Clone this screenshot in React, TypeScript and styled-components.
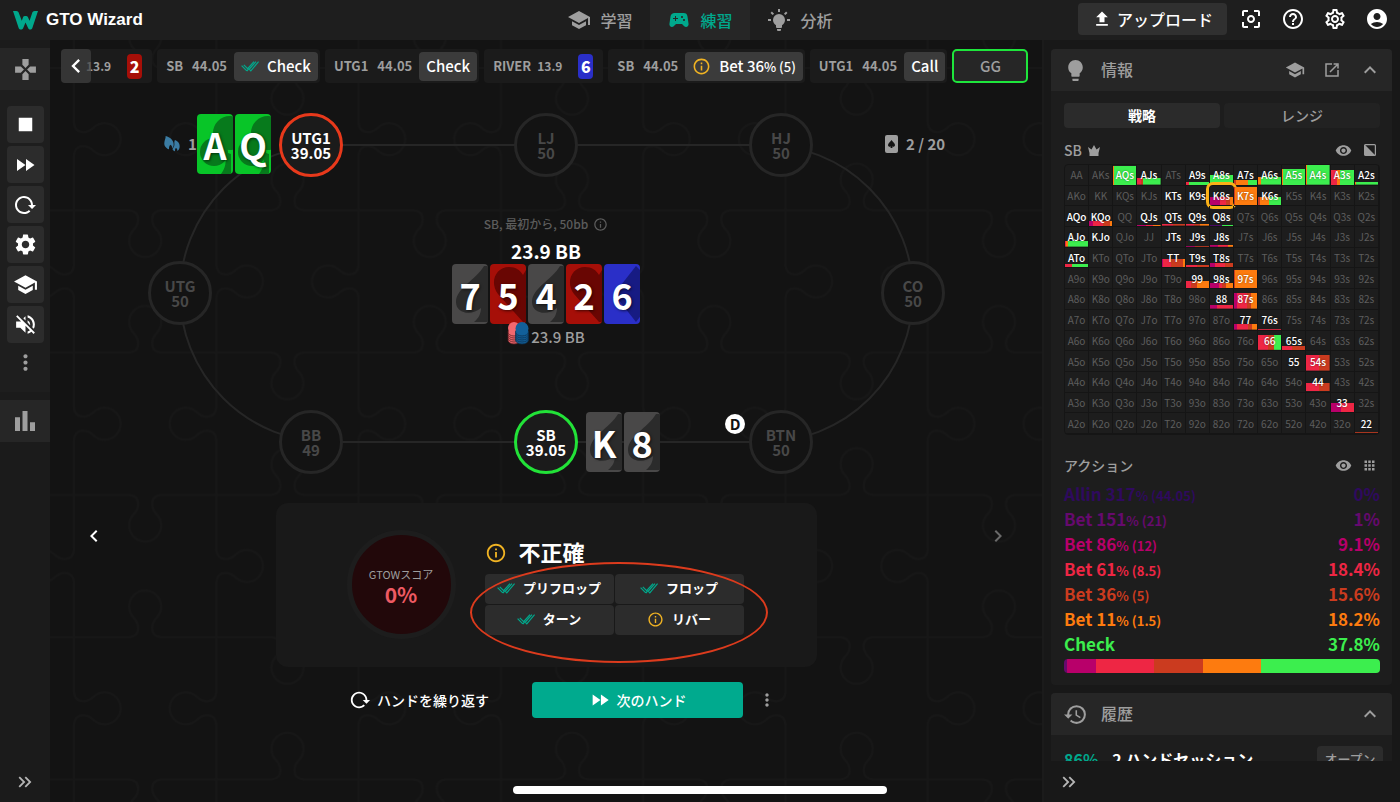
import React from 'react';
import styled, { createGlobalStyle, css } from 'styled-components';
import {
  MdSchool, MdSportsEsports, MdUpload, MdCenterFocusWeak, MdHelpOutline, MdOutlineSettings,
  MdAccountCircle, MdLightbulb, MdKeyboardArrowUp, MdVisibility, MdHistory, MdApps, MdStop,
  MdFastForward, MdSettings, MdVolumeOff, MdMoreVert, MdBarChart, MdGamepad,
  MdKeyboardDoubleArrowRight, MdInfoOutline, MdChevronLeft, MdChevronRight,
} from 'react-icons/md';

const color = {
  page: '#131313',
  rail: '#1b1b1b',
  bar: '#1e1e1e',
  raised: '#262626',
  button: '#2c2c2c',
  chip: '#3b3b3b',
  muted: '#9e9e9e',
  dim: '#484848',
  line: '#262626',
  teal: '#00a88c',
  amber: '#f0b323',
};

const action = {
  p: '#4a0a66',
  v: '#660a6e',
  m: '#b8006a',
  r: '#ee2644',
  b: '#cb3b1f',
  o: '#fd7b0f',
  g: '#3cee4e',
};
type ActionKey = keyof typeof action;

const GlobalStyle = createGlobalStyle`
  *, *::before, *::after { box-sizing: border-box; }
  body {
    margin: 0;
    background: ${color.page};
    color: #fff;
    font-family: "Noto Sans CJK JP", "Noto Sans", sans-serif;
    font-size: 14px;
    line-height: 20px;
  }
  button { font: inherit; color: inherit; border: 0; padding: 0; background: none; cursor: pointer; }
  a { color: inherit; text-decoration: none; }
  h1, h2, p { margin: 0; font-size: inherit; font-weight: inherit; }
  small { line-height: 0; }
  svg { display: block; flex: none; }
`;

/* ---------- icons ---------- */

const ReloadIcon = ({ size = 24 }: { size?: number }) => (
  <svg width={size} height={size} viewBox="0 0 24 24" fill="currentColor" aria-hidden>
    <path d="M2 12C2 16.97 6.03 21 11 21C13.39 21 15.68 20.06 17.4 18.4L15.9 16.9C14.63 18.25 12.86 19 11 19C4.76 19 1.64 11.46 6.05 7.05C10.46 2.64 18 5.77 18 12H15L19 16H19.1L23 12H20C20 7.03 15.97 3 11 3C6.03 3 2 7.03 2 12Z" />
  </svg>
);

const BulbOnIcon = () => (
  <svg width="24" height="24" viewBox="0 0 24 24" fill="currentColor" aria-hidden>
    <path d="M12,6A6,6 0 0,1 18,12C18,14.22 16.79,16.16 15,17.2V19A1,1 0 0,1 14,20H10A1,1 0 0,1 9,19V17.2C7.21,16.16 6,14.22 6,12A6,6 0 0,1 12,6M14,21V22A1,1 0 0,1 13,23H11A1,1 0 0,1 10,22V21H14M20,11H23V13H20V11M1,11H4V13H1V11M13,1V4H11V1H13M4.92,3.5L7.05,5.64L5.63,7.05L3.5,4.93L4.92,3.5M16.95,5.63L19.07,3.5L20.5,4.93L18.37,7.05L16.95,5.63Z" />
  </svg>
);

const LogoMark = () => (
  <svg width="25" height="19" viewBox="0 0 74 56" fill={color.teal} aria-hidden>
    <path d="M0 0C6 -1 15 -1 17 5L26 29L30 18C32 14 42 14 44 18L49 29L57 5C59 -1 68 -1 74 0L57 51C55 56 47 56 45 51L37 34L30 51C28 56 19 56 17 51Z" />
  </svg>
);

const DoubleCheckIcon = () => (
  <svg width="18" height="12" viewBox="0 0 18 12" fill="none" stroke={color.teal} strokeWidth="1.2" aria-hidden>
    <path d="M.6 5.6L5.800 10.800M2.800 4.800L6.600 8.600L13 1.600M5.800 11L8 8.600M8.400 9.400L9.800 10.800L17.600 1.600M8.400 9L15 1.600" />
  </svg>
);

const CrownIcon = () => (
  <svg width="12" height="11" viewBox="0 0 24 22" fill={color.muted} aria-hidden>
    <path d="M3 16L0 4L7 9L12 0L17 9L24 4L21 16ZM3 16H21V22H3Z" />
  </svg>
);

const PopOutIcon = () => (
  <svg width="14" height="14" viewBox="0 0 14 14" fill="none" stroke={color.muted} strokeWidth="1.5" aria-hidden>
    <path d="M7 1H1V13H13V7M5 9L12 2M8.600 1H13V5.400" />
  </svg>
);

const HalfSquareIcon = () => (
  <svg width="12" height="12" viewBox="0 0 12 12" aria-hidden>
    <rect x=".6" y=".6" width="10.800" height="10.800" rx="1" fill="none" stroke={color.muted} strokeWidth="1.200" />
    <path d="M.6 .6L11.400 11.400H.6Z" fill={color.muted} />
  </svg>
);

const HandCountIcon = () => (
  <svg width="13" height="18" viewBox="0 0 13 18" aria-hidden>
    <rect width="13" height="18" rx="2" fill={color.muted} />
    <path d="M6.500 5C7.500 7 10 8 10 10C10 11.800 8 12.200 7 11.200L7.600 13H5.400L6 11.200C5 12.200 3 11.800 3 10C3 8 5.500 7 6.500 5Z" fill={color.page} />
  </svg>
);

const DropsIcon = () => (
  <svg width="16" height="16" viewBox="0 0 48 48" fill="#3b7ca3" aria-hidden>
    <path d="M5 0C18 3 29 13 29 25C29 30 28 34 25 37C25 32 23 29 20 26C15 29 15 34 15 40C6 36 0 30 1 20C2 12 5 8 5 0Z" />
    <path d="M33 12C41 15 47 21 47 30C47 36 46 41 40 45C40 40 39 38 36 36C33 38 33 41 33 46C27 43 25 41 26 38C30 33 32 29 31 22C31 18 31 15 33 12Z" />
  </svg>
);

const ChipsIcon = () => (
  <svg width="22" height="24" viewBox="0 0 22 24" aria-hidden>
    {[20, 18, 16, 14, 12].map((y) => (
      <ellipse key={y} cx="7" cy={y - 1} rx="6" ry="4" fill="#f2686f" stroke="#5d2023" strokeWidth=".8" />
    ))}
    <circle cx="7" cy="7" r="6" fill="#f2686f" />
    {[19, 17, 15, 13, 11].map((y) => (
      <ellipse key={y} cx="15" cy={y} rx="6.500" ry="4" fill="#12609a" stroke="#0b2f4c" strokeWidth=".8" />
    ))}
    <circle cx="15" cy="7.500" r="6.500" fill="#12609a" />
  </svg>
);

/* ---------- playing cards ---------- */

type Suit = 'spade' | 'heart' | 'diamond' | 'club';
const suits: Record<Suit, { face: string; ink: string; art: React.ReactNode }> = {
  spade: {
    face: '#494848',
    ink: '#2b2b2b',
    art: <path d="M32 2C24 16 4 24 4 38C4 50 20 52 29 44C29 49 27 54 22 58H42V2Z" />,
  },
  heart: {
    face: '#a60f08',
    ink: '#690603',
    art: <path d="M33 58L8 30C-1 18 6 3 19 3C26 3 30 6 33 11L36 6V58Z" />,
  },
  diamond: { face: '#2a2fc8', ink: '#171b83', art: <path d="M32 2L10 30L32 58L44 42V14Z" /> },
  club: {
    face: '#08c528',
    ink: '#077a1c',
    art: (
      <>
        <circle cx="33" cy="19" r="17" />
        <circle cx="17" cy="38" r="14" />
        <path d="M28 38L34 40V60H24C28 55 30 48 28 38Z" />
      </>
    ),
  },
};

const CardFace = styled.div<{ $suit: Suit }>`
  position: relative;
  width: 36px;
  height: 60px;
  border-radius: 4px;
  background: ${(p) => suits[p.$suit].face};
  font-size: 36px;
  line-height: 60px;
  font-weight: 700;
  text-align: center;
  text-shadow: 1px 1px 3px rgba(0, 0, 0, 0.6);

  svg {
    position: absolute;
    inset: 0;
    border-radius: 4px;
    fill: ${(p) => suits[p.$suit].ink};
  }
  span { position: relative; }
`;

const PlayingCard = ({ rank, suit }: { rank: string; suit: Suit }) => (
  <CardFace $suit={suit}>
    <svg width="36" height="60" viewBox="0 0 36 60" aria-hidden>{suits[suit].art}</svg>
    <span>{rank}</span>
  </CardFace>
);

/* ---------- shell ---------- */

const Shell = styled.div`
  display: flex;
  flex-direction: column;
  height: 100vh;
  min-height: 760px;
  overflow: hidden;
`;

const Header = styled.header`
  display: grid;
  grid-template-columns: 1fr auto 1fr;
  align-items: center;
  height: 40px;
  flex: none;
  background: ${color.bar};
`;

const Brand = styled.a`
  display: flex;
  align-items: center;
  gap: 8px;
  padding-left: 13px;
  font: 700 17px/20px "Liberation Sans", Arial, sans-serif;
`;

const Tabs = styled.nav`
  display: flex;
  height: 40px;
`;

const Tab = styled.a<{ $active?: boolean }>`
  display: flex;
  align-items: center;
  justify-content: center;
  gap: 9px;
  width: 100px;
  font-size: 16px;
  font-weight: 500;
  color: ${(p) => (p.$active ? color.teal : color.muted)};
  background: ${(p) => (p.$active ? color.raised : 'transparent')};
`;

const HeaderTools = styled.div`
  display: flex;
  align-items: center;
  justify-content: flex-end;
  gap: 18px;
  padding: 0 11px 2px 0;
`;

const UploadButton = styled.button`
  display: flex;
  align-items: center;
  justify-content: center;
  gap: 5px;
  width: 149px;
  height: 32px;
  margin-right: -6px;
  border-radius: 4px;
  background: #303030;
  font-size: 16px;
  font-weight: 500;
`;

const Body = styled.div`
  display: flex;
  flex: 1;
  min-height: 0;
`;

/* ---------- left rail ---------- */

const Rail = styled.aside`
  display: flex;
  flex-direction: column;
  width: 50px;
  flex: none;
  padding-top: 8px;
  background: ${color.rail};
`;

const RailBlock = styled.button`
  display: grid;
  place-items: center;
  height: 42px;
  background: ${color.raised};
  color: ${color.muted};
`;

const RailTools = styled.div`
  display: flex;
  flex-direction: column;
  align-items: center;
  gap: 3px;
  padding: 16px 0 14px;
  margin-bottom: 8px;
  background: ${color.bar};
`;

const RailButton = styled.button<{ $plain?: boolean }>`
  display: grid;
  place-items: center;
  width: 37px;
  height: ${(p) => (p.$plain ? 32 : 37)}px;
  border-radius: 4px;
  background: ${(p) => (p.$plain ? 'transparent' : color.button)};
  color: ${(p) => (p.$plain ? color.muted : '#fff')};
`;

const ExpandButton = styled.button`
  display: grid;
  place-items: center;
  width: 50px;
  height: 41px;
  margin-top: auto;
  color: #b5b5b5;
`;

/* ---------- centre ---------- */

const Main = styled.main`
  position: relative;
  flex: 1;
  min-width: 0;
  display: flex;
  flex-direction: column;
  overflow: hidden;
  isolation: isolate;
`;

const Backdrop = styled.svg`
  position: absolute;
  inset: 0;
  z-index: -1;
`;

const HistoryBar = styled.div`
  display: flex;
  gap: 5px;
  padding: 9px 11px 0;
  position: relative;
`;

const HistoryItem = styled.div`
  display: flex;
  align-items: center;
  gap: 9px;
  height: 34px;
  padding: 0 2px 0 9px;
  border-radius: 4px;
  background: ${color.rail};
  color: ${color.muted};
  font-size: 13px;
  font-weight: 700;
  white-space: nowrap;

  > span { margin-right: -2px; }
  > small { font-size: 12px; }
`;

const StreetItem = styled(HistoryItem)`
  gap: 6px;
  padding-right: 10px;
  b { margin-left: 10px; }
`;

const FirstStreet = styled(StreetItem)`
  padding-left: 25px;
`;

const BackButton = styled.button`
  position: absolute;
  left: 11px;
  top: 9px;
  display: grid;
  place-items: center;
  width: 30px;
  height: 34px;
  border-radius: 4px;
  background: rgba(64, 64, 64, 0.7);
`;

const MiniCard = styled.b<{ $suit: Suit }>`
  width: 15px;
  height: 25px;
  border-radius: 4px;
  background: ${(p) => suits[p.$suit].face};
  color: #fff;
  font-size: 16px;
  line-height: 24px;
  text-align: center;
`;

const Move = styled.button`
  display: flex;
  align-items: center;
  gap: 6px;
  height: 29px;
  padding: 0 7px;
  border-radius: 4px;
  background: ${color.chip};
  color: #fff;
  font-size: 15px;
  font-weight: 500;

  small { font-size: 13px; }
  svg + span { padding-left: 2px; }
`;

const EndItem = styled.button`
  width: 76px;
  height: 34px;
  border: 2px solid #1ee63c;
  border-radius: 5px;
  background: ${color.raised};
  color: ${color.muted};
  font-size: 15px;
  font-weight: 500;
`;

const Table = styled.section`
  position: relative;
  width: 800px;
  height: 390px;
  margin: 13px auto 0;
  flex: none;
`;

const Felt = styled.div`
  position: absolute;
  inset: 48px 32px 43px 33px;
  border: 2px solid ${color.line};
  border-radius: 150px;
`;

type Tone = 'dim' | 'hero' | 'villain';
const toneColor: Record<Tone, string> = { dim: color.line, hero: '#22e238', villain: '#e8391b' };

const Seat = styled.div<{ $x: number; $y: number; $tone: Tone }>`
  position: absolute;
  left: ${(p) => p.$x - 32}px;
  top: ${(p) => p.$y - 32}px;
  display: flex;
  flex-direction: column;
  align-items: center;
  justify-content: center;
  width: 64px;
  height: 64px;
  border: 3px solid ${(p) => toneColor[p.$tone]};
  border-radius: 50%;
  background: ${(p) => (p.$tone === 'dim' ? color.page : '#1b1b1b')};
  color: ${(p) => (p.$tone === 'dim' ? color.dim : '#fff')};
  font-size: 15px;
  font-weight: 700;
  line-height: 15px;
`;

const Placed = styled.div<{ $x: number; $y: number }>`
  position: absolute;
  left: ${(p) => p.$x}px;
  top: ${(p) => p.$y}px;
  display: flex;
  align-items: center;
  gap: 2px;
`;

const BetTag = styled(Placed)`
  gap: 8px;
  color: ${color.muted};
  font-size: 15px;
  font-weight: 700;
`;

const Dealer = styled(Placed)`
  justify-content: center;
  width: 20px;
  height: 20px;
  border-radius: 50%;
  background: #fff;
  color: #111;
  font-size: 15px;
  font-weight: 700;
`;

const Board = styled.div`
  position: absolute;
  inset: 117px 0 auto;
  display: flex;
  flex-direction: column;
  align-items: center;
`;

const SpotName = styled.p`
  display: flex;
  align-items: center;
  gap: 5px;
  height: 22px;
  color: #5c5c5c;
  font-size: 12px;
  font-weight: 500;
`;

const Pot = styled.p`
  height: 29px;
  font-size: 19px;
  line-height: 31px;
  font-weight: 700;
`;

const BoardCards = styled.div`
  display: flex;
  gap: 2px;
`;

const PotChips = styled.p`
  display: flex;
  align-items: center;
  gap: 2px;
  height: 24px;
  margin-top: -3px;
  z-index: 1;
  color: ${color.muted};
  font-size: 15px;
  font-weight: 500;
  span { padding-top: 8px; }
`;

const Review = styled.section`
  display: flex;
  align-items: flex-start;
  justify-content: space-between;
  margin-top: 17px;
  padding: 0 32px;
`;

const StepButton = styled.button<{ $muted?: boolean }>`
  display: grid;
  place-items: center;
  width: 24px;
  height: 24px;
  margin-top: 21px;
  color: ${(p) => (p.$muted ? '#6a6a6a' : '#fff')};
`;

const ResultPanel = styled.div`
  display: flex;
  width: 541px;
  height: 164px;
  padding: 27px 71px 0;
  gap: 29px;
  border-radius: 12px;
  background: #191919;
`;

const Score = styled.div`
  display: flex;
  flex-direction: column;
  align-items: center;
  justify-content: center;
  width: 109px;
  height: 109px;
  border: 5px solid #1d1d1d;
  border-radius: 50%;
  background: #22080a;
  color: ${color.muted};
  font-size: 11px;
  line-height: 18px;

  strong { color: #ee5a63; font-size: 21px; line-height: 22px; font-weight: 700; }
`;

const Verdict = styled.div`
  position: relative;
  padding-top: 8px;
`;

const VerdictTitle = styled.h2`
  display: flex;
  align-items: center;
  gap: 12px;
  height: 30px;
  font-size: 22px;
  font-weight: 700;
  svg { color: ${color.amber}; }
  span { padding-bottom: 4px; }
`;

const Streets = styled.div`
  display: grid;
  grid-template-columns: 129px 129px;
  gap: 1px;
  padding-top: 6px;
`;

const StreetButton = styled.button`
  display: flex;
  align-items: center;
  justify-content: center;
  gap: 8px;
  height: 30px;
  padding-bottom: 2px;
  border-radius: 4px;
  background: ${color.button};
  font-size: 13px;
  font-weight: 700;
`;

const Circled = styled.div`
  position: absolute;
  left: -15px;
  top: 32px;
  width: 298px;
  height: 101px;
  border: 2px solid #dc3b1d;
  border-radius: 50%;
  pointer-events: none;
`;

const Footer = styled.div`
  display: flex;
  align-items: center;
  justify-content: center;
  gap: 10px;
  margin-top: 15px;
  padding-left: 38px;
`;

const RepeatButton = styled.button`
  display: flex;
  align-items: center;
  gap: 6px;
  margin-right: 33px;
  font-weight: 500;
`;

const NextButton = styled.button`
  display: flex;
  align-items: center;
  justify-content: center;
  gap: 6px;
  width: 211px;
  height: 36px;
  border-radius: 4px;
  background: #00aa8e;
  font-weight: 500;
`;

const MoreButton = styled.button`
  color: ${color.muted};
  padding: 0 4px;
`;

/* ---------- right column ---------- */

const Side = styled.aside`
  display: flex;
  flex-direction: column;
  width: 358px;
  flex: none;
  border-left: 2px solid ${color.rail};
  background: #181818;
`;

const SideScroll = styled.div`
  flex: 1;
  min-height: 0;
  overflow: hidden;
  padding: 9px 8px 0 7px;
  display: flex;
  flex-direction: column;
  gap: 8px;
`;

const Panel = styled.section`
  flex: none;
  border-radius: 4px;
  background: #1d1d1d;
`;

const PanelHead = styled.header`
  display: flex;
  align-items: center;
  gap: 16px;
  height: 42px;
  padding: 0 13px 0 12px;
  border-radius: 4px 4px 0 0;
  background: ${color.raised};
  color: ${color.muted};

  h2 { flex: 1; padding-bottom: 2px; margin-left: -3px; font-size: 16px; font-weight: 500; }
`;

const HeadTool = styled.button`
  display: grid;
  place-items: center;
  width: 21px;
`;

const InfoBody = styled.div`
  padding: 12px 12px 12px 13px;
`;

const Switch = styled.div`
  display: grid;
  grid-template-columns: 1fr 1fr;
  gap: 4px;
`;

const SwitchButton = styled.button<{ $on?: boolean }>`
  height: 25px;
  padding-bottom: 2px;
  border-radius: 4px;
  background: ${(p) => (p.$on ? '#2b2b2b' : '#222')};
  color: ${(p) => (p.$on ? '#fff' : color.muted)};
  font-weight: ${(p) => (p.$on ? 700 : 500)};
`;

const Caption = styled.div<{ $space: number }>`
  display: flex;
  align-items: center;
  gap: 10px;
  height: 20px;
  margin-top: ${(p) => p.$space}px;
  color: ${color.muted};
  font-weight: 500;

  span { margin-right: auto; display: flex; align-items: center; gap: 6px; }
`;

const CaptionTool = styled.button`
  display: grid;
  place-items: center;
  width: 17px;
  &:last-child { width: 21px; margin-left: -3px; }
`;

const Matrix = styled.table`
  width: 100%;
  height: 271px;
  margin-top: 4px;
  table-layout: fixed;
  border-collapse: separate;
  border-spacing: 0;
  border: 1px solid #151515;
  border-radius: 4px;
`;

const fillStops = (mix: string) => {
  let at = 0;
  return mix.split(' ').map((part) => {
    const from = at;
    at += Number(part.slice(1));
    return `${action[part[0] as ActionKey]} ${from}% ${at}%`;
  }).join(', ');
};

const Cell = styled.td<{ $in: boolean; $h?: number; $mix?: string; $picked?: boolean }>`
  position: relative;
  padding: 0;
  border-right: 1px solid #151515;
  border-bottom: 1px solid #151515;
  font-size: 10px;
  line-height: 15px;
  text-align: center;
  background-clip: padding-box;
  color: ${(p) => (p.$in ? '#fff' : '#5d5d5d')};
  font-weight: ${(p) => (p.$in ? 500 : 400)};
  ${(p) => p.$in && css`text-shadow: 0 0 2px rgba(0, 0, 0, 0.5);`}
  ${(p) => p.$mix && css`
    background-image: linear-gradient(to right, ${fillStops(p.$mix)});
    background-size: 100% ${p.$h}%;
    background-position: bottom;
    background-repeat: no-repeat;
  `}
  ${(p) => p.$picked && css`
    &::after {
      content: '';
      position: absolute;
      inset: -4px;
      border: 3px solid #fbb117;
      border-radius: 7px;
    }
  `}
`;

const Actions = styled.ul`
  list-style: none;
  margin: 6px 0 3px;
  padding: 0;
`;

const ActionRow = styled.li<{ $color: string }>`
  display: flex;
  justify-content: space-between;
  color: ${(p) => p.$color};
  font-size: 17px;
  line-height: 25px;
  font-weight: 700;
  small { font-size: 13px; }
`;

const MixBar = styled.div`
  display: flex;
  height: 14px;
  border-radius: 4px;
  overflow: hidden;
`;

const MixPart = styled.div<{ $share: number; $color: string }>`
  flex: ${(p) => p.$share} 0 0;
  background: ${(p) => p.$color};
`;

const Session = styled.div`
  display: flex;
  align-items: center;
  gap: 14px;
  padding: 11px 9px 12px 13px;
  font-size: 16px;
  font-weight: 700;

  em { font-style: normal; color: ${color.teal}; }
  p { flex: 1; }
`;

const OpenButton = styled.button`
  width: 66px;
  height: 26px;
  border-radius: 4px;
  background: ${color.button};
  color: ${color.muted};
  font-size: 13px;
  font-weight: 500;
`;

const HomeIndicator = styled.div`
  position: fixed;
  left: 50%;
  bottom: 8px;
  width: 374px;
  height: 8px;
  margin-left: -187px;
  border-radius: 4px;
  background: #fff;
`;

/* ---------- data ---------- */

const ranks = 'AKQJT98765432'.split('');

/* share of the cell height, then the action mix from left to right */
const range: Record<string, [number, string] | null> = {
  AQs: [95, 'o4 g96'], AJs: [33, 'r18 b10 g72'], A9s: [15, 'r12 g88'], A8s: [50, 'g100'],
  A7s: [25, 'b10 o50 g40'], A6s: [38, 'o12 g88'], A5s: [80, 'o4 g96'], A4s: [100, 'o5 g95'],
  A3s: [75, 'r25 o15 g60'], A2s: [13, 'o4 g96'],
  KTs: null, K9s: [4, 'm30 r70'], K8s: [45, 'm42 r28 b15 o15'], K7s: [98, 'b6 o94'], K6s: [45, 'b8 o42 g50'],
  AQo: null, KQo: [25, 'm18 r45 b27 o10'], QJs: [7, 'm40 r30 o30'], QTs: [8, 'r50 b50'],
  Q9s: [8, 'r35 b25 o40'], Q8s: [7, 'p50 g50'],
  AJo: [28, 'r4 o8 g88'], KJo: null, JTs: null, J9s: [4, 'm40 b60'], J8s: [9, 'm35 r45 o20'],
  ATo: [18, 'r30 g70'], TT: [43, 'm5 r35 b52 o8'], T9s: [12, 'r50 b50'], T8s: [25, 'm20 r45 b35'],
  99: [38, 'r20 b30 o50'], '98s': [28, 'm38 r16 b16 o30'], '97s': [90, 'b5 o95'],
  88: [18, 'm30 r70'], '87s': [78, 'm12 r43 b20 o25'],
  77: [28, 'm15 r45 b20 o20'], '76s': [4, 'r100'],
  66: [78, 'r42 b28 g30'], '65s': [22, 'r45 b55'],
  55: null, '54s': [78, 'r55 b45'],
  44: [42, 'r55 b45'],
  33: [50, 'm45 r55'],
  22: [4, 'b100'],
};

const handName = (row: number, col: number) => {
  if (row === col) return ranks[row] + ranks[col];
  return col > row ? `${ranks[row]}${ranks[col]}s` : `${ranks[col]}${ranks[row]}o`;
};

const actions: { name: string; note?: string; share: string; color: string }[] = [
  { name: 'Allin 317', note: '% (44.05)', share: '0%', color: '#2f0a5e' },
  { name: 'Bet 151', note: '% (21)', share: '1%', color: '#660a6e' },
  { name: 'Bet 86', note: '% (12)', share: '9.1%', color: '#b8006a' },
  { name: 'Bet 61', note: '% (8.5)', share: '18.4%', color: '#ee2644' },
  { name: 'Bet 36', note: '% (5)', share: '15.6%', color: '#cb3b1f' },
  { name: 'Bet 11', note: '% (1.5)', share: '18.2%', color: '#fd7b0f' },
  { name: 'Check', share: '37.8%', color: '#3cee4e' },
];

const seats: { name: string; stack: string; x: number; y: number; tone?: Tone }[] = [
  { name: 'UTG1', stack: '39.05', x: 165, y: 49, tone: 'villain' },
  { name: 'LJ', stack: '50', x: 400, y: 49 },
  { name: 'HJ', stack: '50', x: 635, y: 49 },
  { name: 'CO', stack: '50', x: 767, y: 197 },
  { name: 'BTN', stack: '50', x: 635, y: 346 },
  { name: 'SB', stack: '39.05', x: 400, y: 346, tone: 'hero' },
  { name: 'BB', stack: '49', x: 165, y: 346 },
  { name: 'UTG', stack: '50', x: 34, y: 197 },
];

/* one jigsaw side of length s starting at (x, y), its knob pointing across the side */
const s = 142.3;
const side = (x: number, y: number, vertical: boolean, dir: number) => {
  const pt = (a: number, b: number) => (vertical ? `${x + b * dir} ${y + a}` : `${x + a} ${y + b * dir}`);
  const h = s / 2;
  const sweep = (dir > 0) !== vertical ? 0 : 1;
  return `M${pt(0, 0)}L${pt(h - 16, 0)}Q${pt(h - 7, 1)} ${pt(h - 7, 9)}Q${pt(h - 7, 15)} ${pt(h - 12, 20)}` +
    `A16 16 0 1 ${sweep} ${pt(h + 12, 20)}Q${pt(h + 7, 15)} ${pt(h + 7, 9)}Q${pt(h + 7, 1)} ${pt(h + 16, 0)}L${pt(s, 0)}`;
};

const Jigsaw = () => (
  <Backdrop width="100%" height="100%" aria-hidden>
    <defs>
      <pattern id="jigsaw" x="24" y="28" width={s * 2} height={s * 2} patternUnits="userSpaceOnUse">
        {[-1, 0, 1, 2].map((i) => [-1, 0, 1, 2].map((j) => {
          const flip = (i + j) % 2 === 0 ? 1 : -1;
          return (
            <path
              key={`${i},${j}`}
              d={side(i * s, j * s, false, -flip) + side(i * s, j * s, true, flip)}
              fill="none"
              stroke="#171717"
              strokeWidth="2"
            />
          );
        }))}
      </pattern>
    </defs>
    <rect width="100%" height="100%" fill="url(#jigsaw)" />
  </Backdrop>
);

export default function App() {
  return (
    <Shell>
      <GlobalStyle />
      <Header>
        <Brand href="#"><LogoMark />GTO Wizard</Brand>
        <Tabs>
          <Tab href="#"><MdSchool size={24} />学習</Tab>
          <Tab href="#" $active><MdSportsEsports size={24} />練習</Tab>
          <Tab href="#"><BulbOnIcon />分析</Tab>
        </Tabs>
        <HeaderTools>
          <UploadButton><MdUpload size={20} />アップロード</UploadButton>
          <button aria-label="Focus"><MdCenterFocusWeak size={24} /></button>
          <button aria-label="Help"><MdHelpOutline size={24} /></button>
          <button aria-label="Settings"><MdOutlineSettings size={24} /></button>
          <button aria-label="Account"><MdAccountCircle size={24} /></button>
        </HeaderTools>
      </Header>

      <Body>
        <Rail>
          <RailBlock aria-label="Trainer"><MdGamepad size={25} /></RailBlock>
          <RailTools>
            <RailButton aria-label="Stop"><MdStop size={27} /></RailButton>
            <RailButton aria-label="Skip"><MdFastForward size={24} /></RailButton>
            <RailButton aria-label="Repeat"><ReloadIcon /></RailButton>
            <RailButton aria-label="Options"><MdSettings size={25} /></RailButton>
            <RailButton aria-label="Study"><MdSchool size={25} /></RailButton>
            <RailButton aria-label="Mute"><MdVolumeOff size={25} /></RailButton>
            <RailButton aria-label="More" $plain><MdMoreVert size={25} /></RailButton>
          </RailTools>
          <RailBlock aria-label="Statistics"><MdBarChart size={30} /></RailBlock>
          <ExpandButton aria-label="Expand"><MdKeyboardDoubleArrowRight size={22} /></ExpandButton>
        </Rail>

        <Main>
          <Jigsaw />
          <HistoryBar>
            <FirstStreet><small>13.9</small><MiniCard $suit="heart">2</MiniCard></FirstStreet>
            <BackButton aria-label="Back"><MdChevronLeft size={28} /></BackButton>
            <HistoryItem>SB <span>44.05</span><Move><DoubleCheckIcon /><span>Check</span></Move></HistoryItem>
            <HistoryItem>UTG1 <span>44.05</span><Move>Check</Move></HistoryItem>
            <StreetItem>RIVER <small>13.9</small><MiniCard $suit="diamond">6</MiniCard></StreetItem>
            <HistoryItem>
              SB <span>44.05</span>
              <Move><MdInfoOutline size={19} color={color.amber} /><span>Bet 36<small>% (5)</small></span></Move>
            </HistoryItem>
            <HistoryItem>UTG1 <span>44.05</span><Move>Call</Move></HistoryItem>
            <EndItem>GG</EndItem>
          </HistoryBar>

          <Table>
            <Felt />
            {seats.map((seat) => (
              <Seat key={seat.name} $x={seat.x} $y={seat.y} $tone={seat.tone ?? 'dim'}>
                <span>{seat.name}</span>
                <span>{seat.stack}</span>
              </Seat>
            ))}
            <BetTag $x={18} $y={38}><DropsIcon />1</BetTag>
            <Placed $x={51} $y={18}><PlayingCard rank="A" suit="club" /><PlayingCard rank="Q" suit="club" /></Placed>
            <Placed $x={440} $y={316}><PlayingCard rank="K" suit="spade" /><PlayingCard rank="8" suit="spade" /></Placed>
            <Dealer $x={579} $y={318}>D</Dealer>
            <BetTag $x={739} $y={38}><HandCountIcon />2 / 20</BetTag>
            <Board>
              <SpotName>SB, 最初から, 50bb <MdInfoOutline size={15} /></SpotName>
              <Pot>23.9 BB</Pot>
              <BoardCards>
                <PlayingCard rank="7" suit="spade" />
                <PlayingCard rank="5" suit="heart" />
                <PlayingCard rank="4" suit="spade" />
                <PlayingCard rank="2" suit="heart" />
                <PlayingCard rank="6" suit="diamond" />
              </BoardCards>
              <PotChips><ChipsIcon /><span>23.9 BB</span></PotChips>
            </Board>
          </Table>

          <Review>
            <StepButton aria-label="Previous"><MdChevronLeft size={24} /></StepButton>
            <ResultPanel>
              <Score>GTOWスコア<strong>0%</strong></Score>
              <Verdict>
                <VerdictTitle><MdInfoOutline size={22} /><span>不正確</span></VerdictTitle>
                <Streets>
                  <StreetButton><DoubleCheckIcon />プリフロップ</StreetButton>
                  <StreetButton><DoubleCheckIcon />フロップ</StreetButton>
                  <StreetButton><DoubleCheckIcon />ターン</StreetButton>
                  <StreetButton><MdInfoOutline size={17} color={color.amber} />リバー</StreetButton>
                </Streets>
                <Circled />
              </Verdict>
            </ResultPanel>
            <StepButton aria-label="Next" $muted><MdChevronRight size={24} /></StepButton>
          </Review>

          <Footer>
            <RepeatButton><ReloadIcon size={22} />ハンドを繰り返す</RepeatButton>
            <NextButton><MdFastForward size={22} />次のハンド</NextButton>
            <MoreButton aria-label="More"><MdMoreVert size={20} /></MoreButton>
          </Footer>
        </Main>

        <Side>
          <SideScroll>
            <Panel>
              <PanelHead>
                <MdLightbulb size={25} />
                <h2>情報</h2>
                <HeadTool aria-label="Study"><MdSchool size={20} /></HeadTool>
                <HeadTool aria-label="Pop out"><PopOutIcon /></HeadTool>
                <HeadTool aria-label="Collapse"><MdKeyboardArrowUp size={24} /></HeadTool>
              </PanelHead>
              <InfoBody>
                <Switch>
                  <SwitchButton $on>戦略</SwitchButton>
                  <SwitchButton>レンジ</SwitchButton>
                </Switch>
                <Caption $space={12}>
                  <span>SB <CrownIcon /></span>
                  <CaptionTool aria-label="Visibility"><MdVisibility size={17} /></CaptionTool>
                  <CaptionTool aria-label="Display mode"><HalfSquareIcon /></CaptionTool>
                </Caption>
                <Matrix>
                  <tbody>
                    {ranks.map((_, row) => (
                      <tr key={row}>
                        {ranks.map((__, col) => {
                          const name = handName(row, col);
                          const entry = range[name];
                          return (
                            <Cell
                              key={name}
                              $in={name in range}
                              $h={entry?.[0]}
                              $mix={entry?.[1]}
                              $picked={name === 'K8s'}
                            >
                              {name}
                            </Cell>
                          );
                        })}
                      </tr>
                    ))}
                  </tbody>
                </Matrix>
                <Caption $space={20}>
                  <span>アクション</span>
                  <CaptionTool aria-label="Visibility"><MdVisibility size={17} /></CaptionTool>
                  <CaptionTool aria-label="Grid"><MdApps size={15} /></CaptionTool>
                </Caption>
                <Actions>
                  {actions.map((a) => (
                    <ActionRow key={a.name} $color={a.color}>
                      <span>{a.name}{a.note && <small>{a.note}</small>}</span>
                      <span>{a.share}</span>
                    </ActionRow>
                  ))}
                </Actions>
                <MixBar>
                  {actions.map((a) => (
                    <MixPart key={a.name} $share={parseFloat(a.share)} $color={a.color} />
                  ))}
                </MixBar>
              </InfoBody>
            </Panel>
            <Panel>
              <PanelHead>
                <MdHistory size={25} />
                <h2>履歴</h2>
                <HeadTool aria-label="Collapse"><MdKeyboardArrowUp size={24} /></HeadTool>
              </PanelHead>
              <Session>
                <em>86%</em>
                <p>2 ハンドセッション</p>
                <OpenButton>オープン</OpenButton>
              </Session>
            </Panel>
          </SideScroll>
          <ExpandButton aria-label="Collapse panel"><MdKeyboardDoubleArrowRight size={22} /></ExpandButton>
        </Side>
      </Body>
      <HomeIndicator />
    </Shell>
  );
}
